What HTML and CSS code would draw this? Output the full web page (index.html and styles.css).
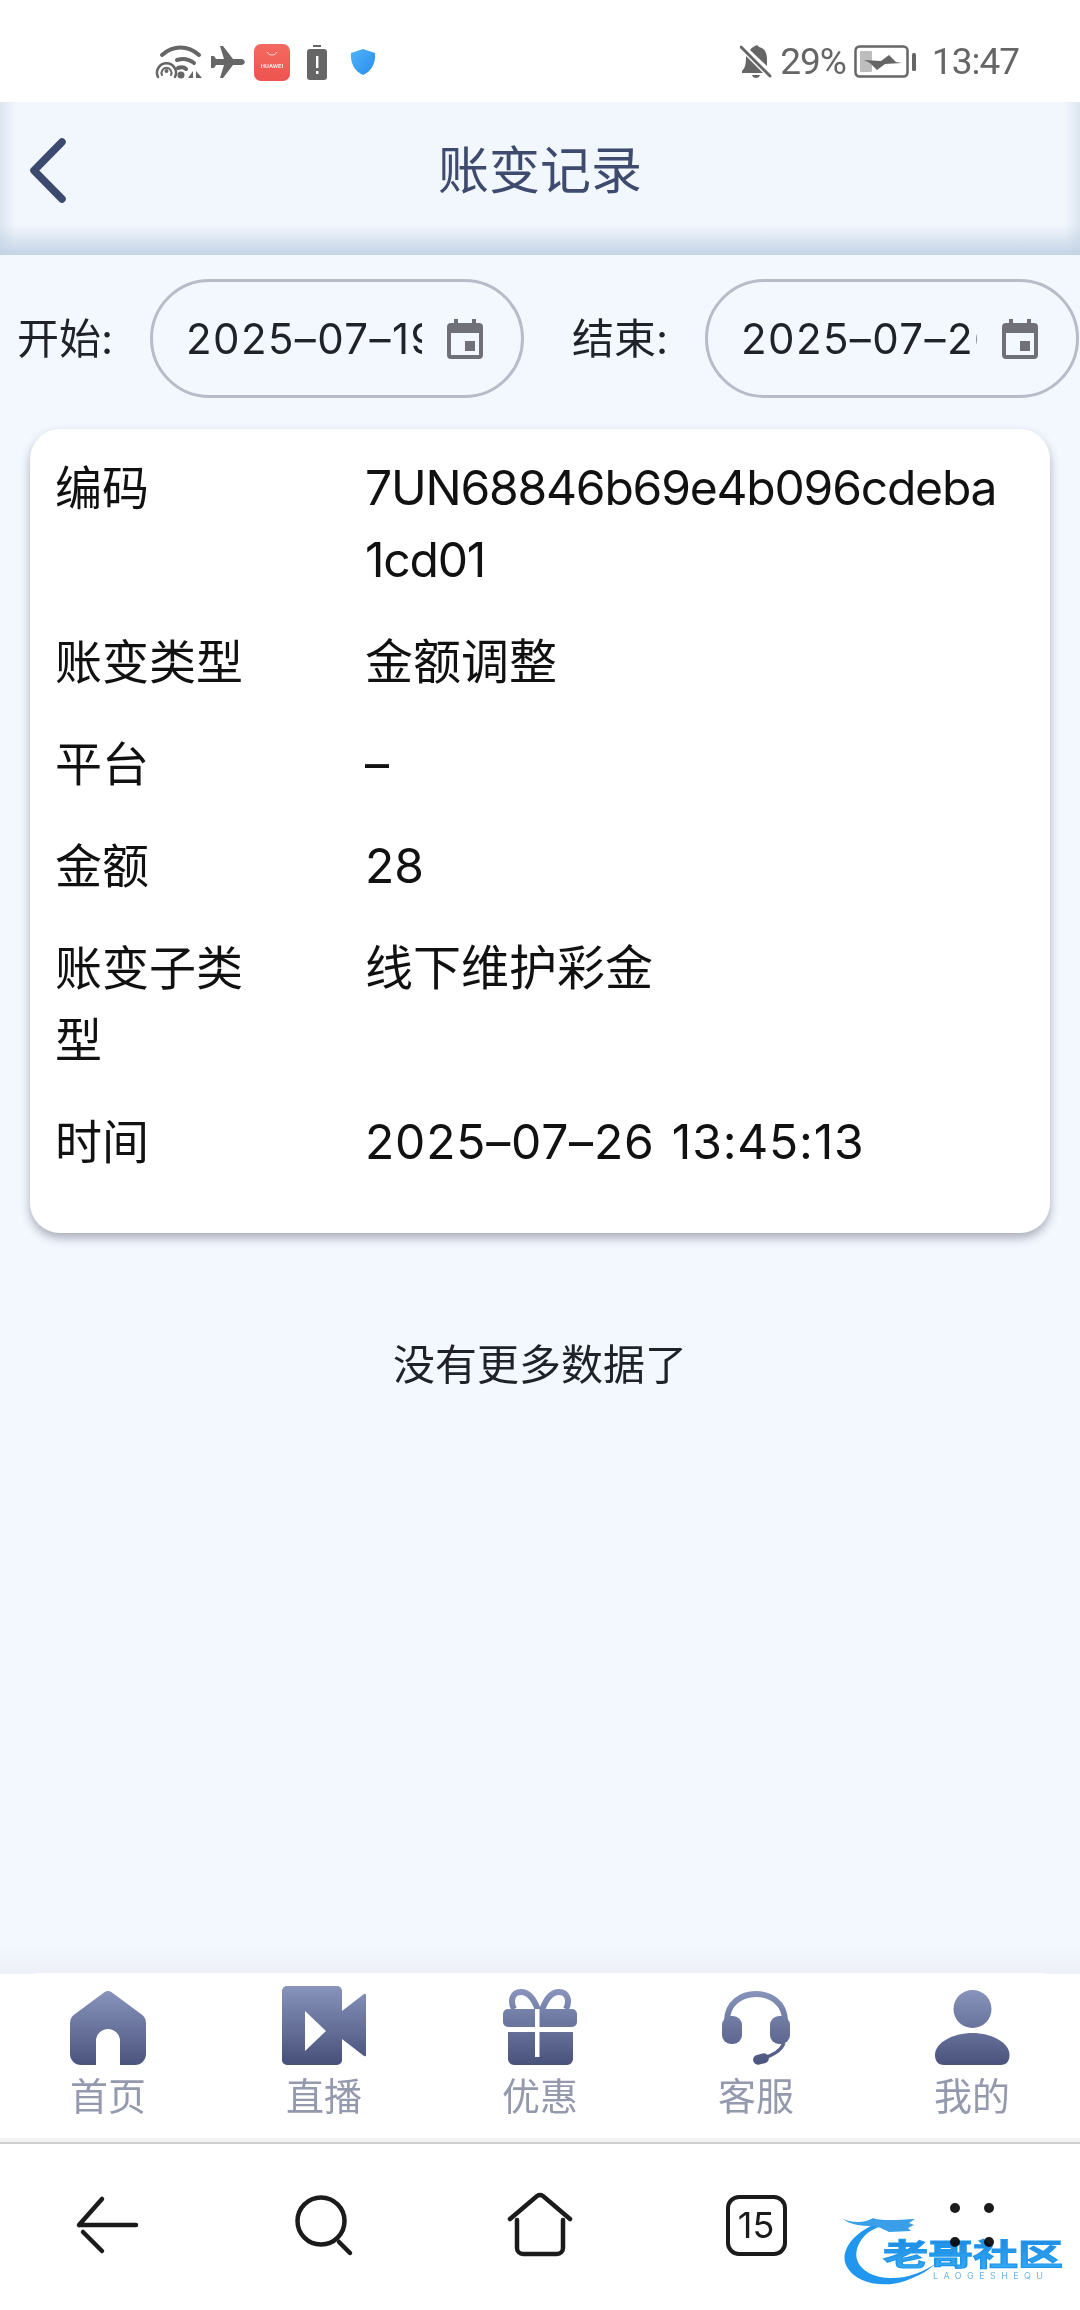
FILE: index.html
```html
<!DOCTYPE html>
<html lang="zh-CN">
<head>
<meta charset="utf-8">
<title>账变记录</title>
<link rel="stylesheet" href="styles.css">
</head>
<body>
<div class="screen">
  <div class="status">
    <div class="status-left">
      <svg class="ic-wifi" viewBox="0 0 48 34"><g fill="none" stroke="#666" stroke-linecap="round"><path d="M7 10C18 0 33 0 44 10" stroke-width="4"/><path d="M22 15c6-2 12-1 17 3" stroke-width="4"/><path d="M23 23c3-1 6-1 8 1" stroke-width="4"/><path d="M3 32a9.500 9.500 0 1 1 17 0" stroke-width="2.500"/><path d="M7 30a5 5 0 1 1 9 0" stroke-width="2"/></g><circle cx="11.500" cy="26" r="2" fill="#666"/><circle cx="26" cy="30" r="3.500" fill="#666"/><path d="M38 26v7h-5zM41 26l6 7h-6z" fill="#666"/></svg>
      <svg class="ic-plane" viewBox="0 0 34 34"><path d="M9 1h3l10 13h8c5 0 5 6 0 6h-8L12 33H9l4-13H5l-2 3H0V11h3l2 3h8z" fill="#666"/></svg>
      <div class="ic-tile"><svg class="ic-tile-smile" viewBox="0 0 12 5"><path d="M1 1c2 4 8 4 10 0" fill="none" stroke="#ffd9d5" stroke-width="1"/></svg><span>HUAWEI</span></div>
      <svg class="ic-bat" viewBox="0 0 20 35"><path d="M6 0h8v2H6zM3 4h14a3 3 0 0 1 3 3v25a3 3 0 0 1-3 3H3a3 3 0 0 1-3-3V7a3 3 0 0 1 3-3z" fill="#666"/><path d="M9 11h2.400v12H9zM9 26h2.400v3H9z" fill="#fff"/></svg>
      <svg class="ic-shield" viewBox="0 0 26 26"><defs><linearGradient id="sg" x1="0" y1="0" x2="1" y2="1"><stop offset="0" stop-color="#4fb4f8"/><stop offset="1" stop-color="#2a8cf0"/></linearGradient></defs><path d="M13 0l12 4c1 9-3 18-12 22C4 22 0 13 1 4z" fill="url(#sg)"/></svg>
    </div>
    <div class="status-right">
      <svg class="ic-bell" viewBox="0 0 32 34"><path d="M15 1c1-1 3-1 4 1 6 1 8 7 8 12v7l-17-16c1-2 3-3 5-4zM6 11l17 17H2v-2c3-3 4-6 4-15zM12 30h8c-1 4-7 4-8 0z" fill="#666"/><path d="M1 2l29 29" stroke="#666" stroke-width="3" stroke-linecap="round"/></svg>
      <span class="st-text st-pct">29%</span>
      <svg class="ic-battery" viewBox="0 0 62 34"><rect x="1.500" y="1.500" width="52" height="30" rx="4" fill="none" stroke="#666" stroke-width="2.500"/><rect x="6" y="6" width="12" height="21" rx="1" fill="#bdbdbd"/><path d="M10 15l17 1 8-6 7 7 6 1-17 1-8 6-7-7z" fill="#666"/><rect x="58" y="8" width="4" height="18" rx="1.500" fill="#666"/></svg>
      <span class="st-text st-time">13:47</span>
    </div>
  </div>

  <header class="header">
    <svg class="back" viewBox="0 0 36 65"><path d="M32 4L4 32.500 32 61" fill="none" stroke="#3c4a70" stroke-width="7.500" stroke-linecap="round" stroke-linejoin="round"/></svg>
    <h1 class="title">账变记录</h1>
  </header>

  <main class="main">
    <div class="filters">
      <div class="filter">
        <span class="filter-label">开始:</span>
        <div class="pill">
          <span class="pill-text">2025–07–19</span>
          <svg class="cal" viewBox="0 0 36 40"><path d="M7 0h4v4h14V0h4v4h3a4 4 0 0 1 4 4v28a4 4 0 0 1-4 4H4a4 4 0 0 1-4-4V8a4 4 0 0 1 4-4h3zM4 14v22h28V14z" fill="#6f7078"/><rect x="18" y="22" width="10" height="10" fill="#6f7078"/></svg>
        </div>
      </div>
      <div class="filter">
        <span class="filter-label">结束:</span>
        <div class="pill">
          <span class="pill-text">2025–07–26</span>
          <svg class="cal" viewBox="0 0 36 40"><path d="M7 0h4v4h14V0h4v4h3a4 4 0 0 1 4 4v28a4 4 0 0 1-4 4H4a4 4 0 0 1-4-4V8a4 4 0 0 1 4-4h3zM4 14v22h28V14z" fill="#6f7078"/><rect x="18" y="22" width="10" height="10" fill="#6f7078"/></svg>
        </div>
      </div>
    </div>

    <section class="card">
      <div class="row"><div class="k">编码</div><div class="v v-code">7UN68846b69e4b096cdeba1cd01</div></div>
      <div class="row"><div class="k">账变类型</div><div class="v">金额调整</div></div>
      <div class="row"><div class="k">平台</div><div class="v">–</div></div>
      <div class="row"><div class="k">金额</div><div class="v">28</div></div>
      <div class="row"><div class="k">账变子类型</div><div class="v">线下维护彩金</div></div>
      <div class="row"><div class="k">时间</div><div class="v v-time">2025–07–26 13:45:13</div></div>
    </section>

    <p class="nomore">没有更多数据了</p>
  </main>

  <nav class="tabs">
    <div class="tab">
      <svg class="tab-ic" width="76" height="74" viewBox="0 0 76 74"><defs><linearGradient id="ng" gradientUnits="userSpaceOnUse" x1="0" y1="0" x2="0" y2="76"><stop offset="0" stop-color="#8894bc"/><stop offset="1" stop-color="#49527a"/></linearGradient></defs><path d="M34 1.500a6 6 0 0 1 8 0L71 23a11 11 0 0 1 5 9v31a11 11 0 0 1-11 11H50V50a12 12 0 0 0-24 0v24H11A11 11 0 0 1 0 63V32a11 11 0 0 1 5-9z" fill="url(#ng)"/></svg>
      <span>首页</span>
    </div>
    <div class="tab">
      <svg class="tab-ic" width="84" height="79" viewBox="0 0 84 79"><path fill-rule="evenodd" d="M5 0h50a5 5 0 0 1 5 5v69a5 5 0 0 1-5 5H5a5 5 0 0 1-5-5V5a5 5 0 0 1 5-5zM23 25v40l21-20z" fill="url(#ng)"/><path d="M60 25L82 8q2-1 2 1v60q0 2-2 1L60 53z" fill="url(#ng)"/></svg>
      <span>直播</span>
    </div>
    <div class="tab">
      <svg class="tab-ic" width="75" height="76" viewBox="0 0 75 76"><path fill-rule="evenodd" d="M5 20h64a5 5 0 0 1 5 5v8a5 5 0 0 1-5 5H5a5 5 0 0 1-5-5v-8a5 5 0 0 1 5-5zM5 43h65v27a6 6 0 0 1-6 6H11a6 6 0 0 1-6-6zM32 43v25h4.500V43z" fill="url(#ng)"/><path d="M35 21C30 7 24 3 18 3 9 3 7 12 11 20M39 21C44 7 50 3 56 3 65 3 67 12 63 20" fill="none" stroke="url(#ng)" stroke-width="6"/><rect class="ribbon" x="32" y="20" width="4.500" height="18"/></svg>
      <span>优惠</span>
    </div>
    <div class="tab">
      <svg class="tab-ic" width="68" height="74" viewBox="0 0 68 74"><path d="M5 30C5 -6 63 -6 63 30" fill="none" stroke="url(#ng)" stroke-width="6"/><rect x="0" y="25" width="20" height="28" rx="9" fill="url(#ng)"/><rect x="48" y="25" width="20" height="28" rx="9" fill="url(#ng)"/><path d="M62 52C59 60 50 65 38 68" fill="none" stroke="url(#ng)" stroke-width="3.500"/><rect x="31" y="63" width="16" height="10" rx="5" transform="rotate(-15 39 68)" fill="url(#ng)"/></svg>
      <span>客服</span>
    </div>
    <div class="tab">
      <svg class="tab-ic" width="75" height="75" viewBox="0 0 75 75"><circle cx="37.500" cy="19" r="19" fill="url(#ng)"/><path d="M37.500 43c18 0 37 9 37 22 0 6-3 10-9 10H9c-6 0-9-4-9-10 0-13 19-22 37.500-22z" fill="url(#ng)"/></svg>
      <span>我的</span>
    </div>
  </nav>

  <div class="browser">
    <div class="b-cell"><svg class="b-ic" width="80" height="80" viewBox="0 0 80 80"><path d="M34 14L11 40 M34 66L15 47 M12 40H68" fill="none" stroke="#1b1b1b" stroke-width="4.500" stroke-linecap="round"/></svg></div>
    <div class="b-cell"><svg class="b-ic" width="80" height="80" viewBox="0 0 80 80"><circle cx="37" cy="36" r="23.500" fill="none" stroke="#1b1b1b" stroke-width="4.500"/><path d="M55 57l11 11" stroke="#1b1b1b" stroke-width="4.500" stroke-linecap="round"/></svg></div>
    <div class="b-cell"><svg class="b-ic" width="80" height="80" viewBox="0 0 80 80"><path d="M10 34L37 11q3-2 6 0L70 34" fill="none" stroke="#1b1b1b" stroke-width="4.500" stroke-linecap="round"/><path d="M17 35V63a6 6 0 0 0 6 6H57a6 6 0 0 0 6-6V35" fill="none" stroke="#1b1b1b" stroke-width="4.500" stroke-linecap="round"/></svg></div>
    <div class="b-cell"><div class="tabcount">15</div></div>
    <div class="b-cell"><div class="dots"><i></i><i></i><i></i><i></i></div></div>
    <svg class="logo" viewBox="0 0 222 70">
      <defs><linearGradient id="lg" x1="0" y1="0" x2="0" y2="1"><stop offset="0" stop-color="#1b86dc"/><stop offset="1" stop-color="#38aef4"/></linearGradient></defs>
      <path d="M30 8C8 18-4 36 4 50c8 15 34 22 58 14 14-5 24-11 30-17-12 8-28 15-46 14C22 60 10 46 14 32 17 22 24 14 36 10z" fill="#2196ee"/>
      <path d="M0 2c10 4 22 4 30-1 6 3 24 2 42 1l-6 4 5 2-6 3 3 3-22 1c-8-4-12-6-18-6C18 9 8 8 0 2z" fill="#3a9fe8"/>
      <text class="logo-cn" x="40" y="48" textLength="180" lengthAdjust="spacingAndGlyphs" fill="url(#lg)">老哥社区</text>
      <text class="logo-en" x="90" y="62" textLength="110" fill="#73b4e4">LAOGESHEQU</text>
    </svg>
  </div>
</div>
</body>
</html>
```

FILE: styles.css
```css
* { box-sizing: border-box; }
html, body { margin: 0; padding: 0; }
body { font-family: Inter, "Noto Sans CJK SC", sans-serif; color: #1f2329; }
.screen { width: 1080px; height: 2310px; display: flex; flex-direction: column; overflow: hidden; background: #fff; position: relative; }

/* status bar */
.status { height: 102px; flex: none; display: flex; justify-content: space-between; align-items: center; padding: 22px 61px 0 155px; background: #fff; font-family: Roboto, sans-serif; }
.status-left { display: flex; align-items: center; }
.ic-wifi { width: 48px; height: 34px; margin-right: 8px; }
.ic-plane { width: 34px; height: 34px; margin-right: 9px; }
.ic-tile { width: 36px; height: 37px; border-radius: 7px; background: linear-gradient(#f26a60, #ee5350); margin-right: 17px; display: flex; flex-direction: column; align-items: center; padding-top: 7px; }
.ic-tile-smile { width: 12px; height: 5px; }
.ic-tile span { font-size: 6px; line-height: 9px; font-weight: 700; color: #ffe3e0; margin-top: 5px; }
.ic-bat { width: 20px; height: 35px; margin-right: 23px; }
.ic-shield { width: 26px; height: 26px; }
.status-right { display: flex; align-items: center; }
.ic-bell { width: 32px; height: 34px; margin-right: 8px; }
.st-text { color: #666; font-size: 37px; line-height: 40px; }
.st-pct { letter-spacing: -1px; margin-right: 8px; }
.ic-battery { width: 62px; height: 34px; margin-right: 16px; }
.st-time { letter-spacing: -1px; }

/* header */
.header { height: 153px; flex: none; display: flex; align-items: center; justify-content: center; padding-bottom: 16px; position: relative;
  background:
    linear-gradient(to top, #c3d3e5, rgba(195,211,229,0) 30px),
    linear-gradient(to right, #dbe5f0, rgba(219,229,240,0) 15px),
    linear-gradient(to left, #dbe5f0, rgba(219,229,240,0) 15px),
    #f2f6fd; }
.back { position: absolute; left: 30px; top: 36px; width: 36px; height: 65px; }
.title { margin: 0; font-size: 51px; font-weight: 400; line-height: 60px; color: #3f4b6e; }

/* main */
.main { flex: 1; background: linear-gradient(to top, #edf1f7, #f3f7fe 30px); min-height: 0; }
.filters { display: flex; gap: 48px; padding: 24px 0 0 17px; width: 1140px; }
.filter { display: flex; align-items: center; flex: none; }
.filter-label { width: 133px; font-size: 42px; line-height: 50px; flex: none; }
.pill { width: 374px; height: 119px; border: 3px solid #b7bcc8; border-radius: 60px; display: flex; align-items: center; padding-left: 33px; }
.pill-text { width: 236px; overflow: hidden; white-space: nowrap; font-size: 42px; line-height: 50px; letter-spacing: 1.4px; flex: none; }
.cal { width: 36px; height: 40px; margin-left: 25px; flex: none; }

.card { margin: 31px 30px 0; padding: 23px 50px 25px 25px; background: #fff; border-radius: 30px; box-shadow: 0 5px 10px rgba(60,66,84,.4); }
.row { display: flex; font-size: 48px; line-height: 72px; padding-bottom: 30px; color: #111; }
.k { width: 200px; flex: none; margin-right: 110px; font-size: 47px; }
.v { flex: 1; min-width: 0; overflow-wrap: anywhere; }
.v-code { letter-spacing: -1.2px; }
.v-time { letter-spacing: .8px; word-spacing: 3px; }

.nomore { margin: 102px 0 0; text-align: center; font-size: 42px; line-height: 60px; color: #1f2329; }

/* bottom tabs */
.tabs { height: 169px; flex: none; display: grid; grid-template-columns: repeat(5, 1fr); background: #fff; border-radius: 40px 40px 0 0; margin-top: -1px; position: relative; padding-top: 18px; border-bottom: 4px solid #f2f2f2; }
.tab { display: flex; flex-direction: column; align-items: center; height: 132px; justify-content: flex-end; }
.tab-ic { flex: none; }
.ribbon { fill: #fff; }
.tab span { font-size: 38px; line-height: 54px; margin-top: 4px; color: #9499ad; }

/* browser bar */
.browser { height: 168px; flex: none; display: grid; grid-template-columns: repeat(5, 1fr); align-items: center; position: relative; border-top: 2px solid #cfcfcf; padding-bottom: 4px; background: #fff; }
.b-cell { display: flex; justify-content: center; align-items: center; }
.tabcount { width: 61px; height: 61px; border: 4.500px solid #1b1b1b; border-radius: 13px; font-size: 36px; line-height: 52px; text-align: center; color: #1b1b1b; }
.dots { display: grid; grid-template-columns: 10px 10px; gap: 24px 24px; }
.dots i { width: 10px; height: 10px; border-radius: 50%; background: #1b1b1b; }
.logo { position: absolute; left: 843px; top: 73px; width: 222px; height: 70px; mix-blend-mode: multiply; }
.logo-cn { font-size: 30px; font-weight: 700; stroke: #2196ee; stroke-width: 1.2px; }
.logo-en { font-size: 9px; }
```
